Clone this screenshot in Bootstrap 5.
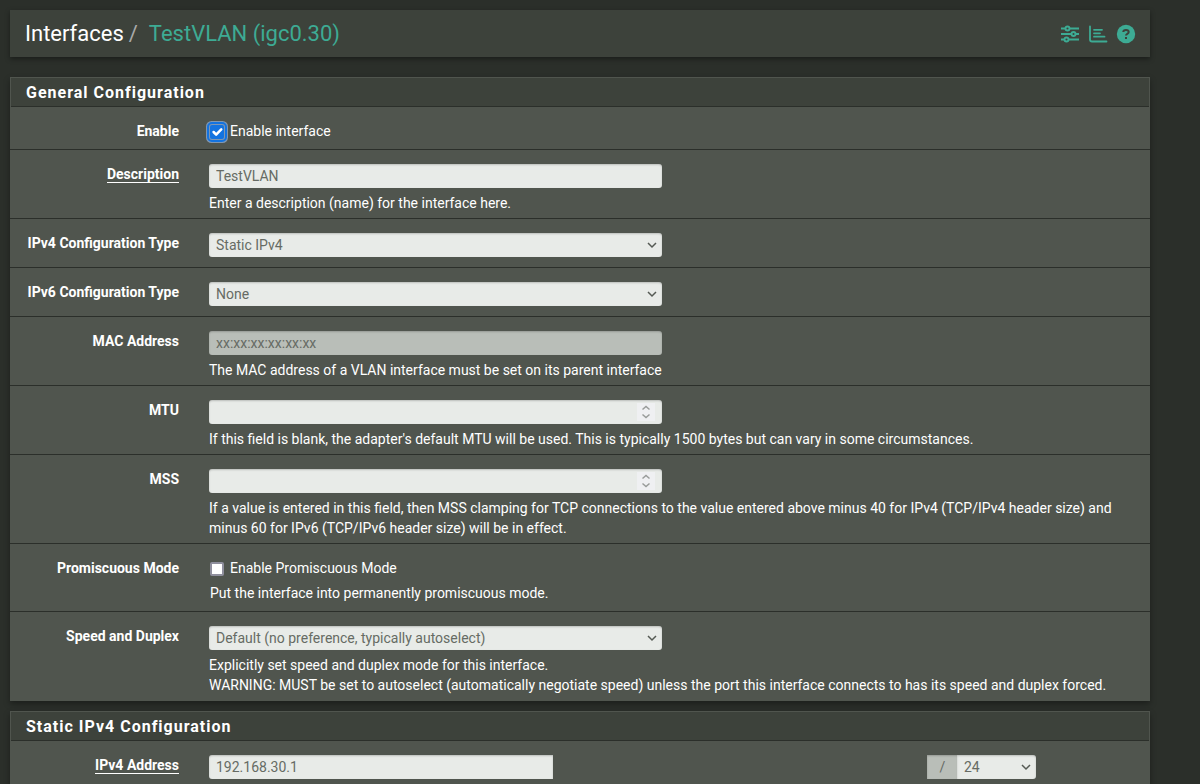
<!DOCTYPE html>
<html lang="en">
<head>
<meta charset="utf-8">
<meta name="viewport" content="width=device-width, initial-scale=1">
<title>Interfaces: TestVLAN (igc0.30)</title>
<link href="https://cdn.jsdelivr.net/npm/bootstrap@5.3.0/dist/css/bootstrap.min.css" rel="stylesheet">
<style>
body{background:#2b2f2a;color:#fff;font:14px/20px Roboto,"Liberation Sans",sans-serif;overflow-x:hidden}
.page-wrap{margin:10px 50px 0 10px}
.title-bar{background:#3d423b;height:47px;padding:0 14px 0 15px;margin-bottom:20px;box-shadow:0 2px 5px rgba(0,0,0,.4)}
.title-bar .breadcrumb{font-size:22px;line-height:26px}
.title-bar a{color:#fff;text-decoration:none}
.title-bar .breadcrumb-item a.current{color:#3dab94}
.title-bar .breadcrumb-item+.breadcrumb-item{padding-left:5px}
.title-bar .breadcrumb-item+.breadcrumb-item::before{color:#aaa;padding-right:11px}
.title-bar svg{display:block}
.tools a{color:#3dab94}
.panel{background:#50554e;margin-bottom:10px;box-shadow:0 3px 6px rgba(0,0,0,.35)}
.panel-title{background:#3d423b;border:1px solid #50554e;border-bottom:0;box-shadow:inset 0 -1px #2b2f2a;font-size:16px;font-weight:700;line-height:20px;letter-spacing:1px;padding:5px 15px 4px;margin:0}
.form-line{border-bottom:1px solid #2b2f2a;padding:14px 0 10px}
.form-line.tight{padding-bottom:5px}
.form-line.check-line{padding-bottom:8px}
.form-line:last-child{border-bottom-color:transparent}
.label-col{padding:0 21px 0 0;text-align:right}
.label-col label,.label-col span{font-weight:700;line-height:20px;display:inline-block;vertical-align:top}
.label-col .required{line-height:16px;margin-top:2px;border-bottom:1px solid #fff}
.field-col{padding:0 9px}
.half{padding:0 13px 0 0}
.form-control,.form-select,.input-group-text{height:24px;min-height:24px;padding:0 7px;border:0;border-radius:3px;background-color:#e8ebe8;color:#666b64;font-size:14px;line-height:24px;box-shadow:inset 0 1px 2px rgba(0,0,0,.2)}
.form-select{background-image:url("data:image/svg+xml,%3Csvg xmlns='http://www.w3.org/2000/svg' viewBox='0 0 10 10'%3E%3Cpath d='M1 3l4 4 4-4' fill='none' stroke='%23555a54' stroke-width='1.5'/%3E%3C/svg%3E");background-size:10px 10px;background-position:right 5px center;padding-right:20px}
.form-control:disabled{background:#b9beb8;color:#666b64;opacity:1}
.help{padding-top:5px}
.num-wrap{position:relative}
.num-wrap input{appearance:textfield}
.num-wrap input::-webkit-inner-spin-button{display:none}
.num-wrap svg{position:absolute;right:7px;top:3px;background:#eff0f2;pointer-events:none}
.check{display:flex;align-items:center;line-height:20px}
.check .form-check-input{width:14px;height:14px;margin:1px 6px 0 1px;border:2px solid #8f8f9d;border-radius:2px;background-color:#fff;float:none;flex:none}
.check .form-check-input:checked{border:0;background-color:#1373e0;background-size:17px;outline:2px solid #1373e0;outline-offset:1px;box-shadow:0 0 0 4px #7f97b2}
.help-check{padding:5px 1px 0}
.address-grid{display:grid;grid-template-columns:344fr 374fr 109fr 105fr}
.address-grid .form-control{border-radius:3px 0 0 3px}
.address-grid .input-group{grid-column:3;flex-wrap:nowrap}
.address-grid .input-group-text{width:31px;justify-content:center;background:#b9beb8;border-radius:0}
</style>
</head>
<body>
<div class="page-wrap">
<header class="title-bar d-flex align-items-center justify-content-between">
<nav aria-label="breadcrumb"><ol class="breadcrumb mb-0">
<li class="breadcrumb-item"><a href="#">Interfaces</a></li>
<li class="breadcrumb-item"><a class="current" href="#">TestVLAN (igc0.30)</a></li>
</ol></nav>
<div class="tools d-flex gap-2">
<a href="#" aria-label="Settings"><svg width="20" height="20" viewBox="0 0 20 20" fill="none" stroke="currentColor" stroke-width="1.9"><path d="M1 4.500h4.500M9.500 4.500H19M1 10h10M15.500 10H19M1 15.500h3.500M9 15.500h10"/><circle cx="7.500" cy="4.500" r="2"/><circle cx="13.500" cy="10" r="2"/><circle cx="6.500" cy="15.500" r="2"/></svg></a>
<a href="#" aria-label="Status"><svg width="20" height="20" viewBox="0 0 20 20" fill="none" stroke="currentColor" stroke-width="1.800" stroke-linecap="round"><path d="M2 2.500v13q0 2 2 2h14.500M6 5.800h8M6 9.300h6M6 12.700h10.500"/></svg></a>
<a href="#" aria-label="Help"><svg width="20" height="20" viewBox="0 0 20 20"><circle cx="10" cy="10" r="9.200" fill="currentColor"/><path d="M7.300 8c0-2.800 5.400-2.800 5.400 0 0 2-2.700 1.700-2.700 3.500M10 13v2" fill="none" stroke="#3d423b" stroke-width="2"/></svg></a>
</div>
</header>
<main>
<form>
<section class="panel">
<h2 class="panel-title">General Configuration</h2>
<div class="form-line check-line row g-0">
<div class="col-2 label-col"><span>Enable</span></div>
<div class="col-10 field-col"><label class="check"><input class="form-check-input" type="checkbox" checked>Enable interface</label></div>
</div>
<div class="form-line tight row g-0">
<div class="col-2 label-col"><label class="required" for="descr">Description</label></div>
<div class="col-10 field-col"><div class="col-6 half"><input id="descr" class="form-control" type="text" value="TestVLAN"></div><div class="help">Enter a description (name) for the interface here.</div></div>
</div>
<div class="form-line row g-0">
<div class="col-2 label-col"><label for="type4">IPv4 Configuration Type</label></div>
<div class="col-10 field-col"><div class="col-6 half"><select id="type4" class="form-select"><option>Static IPv4</option></select></div></div>
</div>
<div class="form-line row g-0">
<div class="col-2 label-col"><label for="type6">IPv6 Configuration Type</label></div>
<div class="col-10 field-col"><div class="col-6 half"><select id="type6" class="form-select"><option>None</option></select></div></div>
</div>
<div class="form-line tight row g-0">
<div class="col-2 label-col"><label for="mac">MAC Address</label></div>
<div class="col-10 field-col"><div class="col-6 half"><input id="mac" class="form-control" type="text" value="xx:xx:xx:xx:xx:xx" disabled></div><div class="help">The MAC address of a VLAN interface must be set on its parent interface</div></div>
</div>
<div class="form-line tight row g-0">
<div class="col-2 label-col"><label for="mtu">MTU</label></div>
<div class="col-10 field-col"><div class="col-6 half"><div class="num-wrap"><input id="mtu" class="form-control" type="number"><svg width="18" height="18" viewBox="0 0 18 18" fill="none" stroke="#999c9a" stroke-width="1.5"><path d="M5.500 6.500L9 3.500l3.500 3M5.500 11.500L9 14.500l3.500-3"/></svg></div></div><div class="help">If this field is blank, the adapter's default MTU will be used. This is typically 1500 bytes but can vary in some circumstances.</div></div>
</div>
<div class="form-line tight row g-0">
<div class="col-2 label-col"><label for="mss">MSS</label></div>
<div class="col-10 field-col"><div class="col-6 half"><div class="num-wrap"><input id="mss" class="form-control" type="number"><svg width="18" height="18" viewBox="0 0 18 18" fill="none" stroke="#999c9a" stroke-width="1.5"><path d="M5.500 6.500L9 3.500l3.500 3M5.500 11.500L9 14.500l3.500-3"/></svg></div></div><div class="help">If a value is entered in this field, then MSS clamping for TCP connections to the value entered above minus 40 for IPv4 (TCP/IPv4 header size) and minus 60 for IPv6 (TCP/IPv6 header size) will be in effect.</div></div>
</div>
<div class="form-line check-line row g-0">
<div class="col-2 label-col"><span>Promiscuous Mode</span></div>
<div class="col-10 field-col"><label class="check"><input class="form-check-input" type="checkbox">Enable Promiscuous Mode</label><div class="help-check">Put the interface into permanently promiscuous mode.</div></div>
</div>
<div class="form-line tight row g-0">
<div class="col-2 label-col"><label for="speed">Speed and Duplex</label></div>
<div class="col-10 field-col"><div class="col-6 half"><select id="speed" class="form-select"><option>Default (no preference, typically autoselect)</option></select></div><div class="help">Explicitly set speed and duplex mode for this interface.<br>WARNING: MUST be set to autoselect (automatically negotiate speed) unless the port this interface connects to has its speed and duplex forced.</div></div>
</div>
</section>
<section class="panel mb-0">
<h2 class="panel-title">Static IPv4 Configuration</h2>
<div class="form-line tight row g-0">
<div class="col-2 label-col"><label class="required" for="addr">IPv4 Address</label></div>
<div class="col-10 field-col"><div class="address-grid"><input id="addr" class="form-control" type="text" value="192.168.30.1"><div class="input-group"><span class="input-group-text">/</span><select class="form-select" aria-label="Subnet bits"><option>24</option></select></div></div></div>
</div>
</section>
</form>
</main>
</div>
<script src="https://cdn.jsdelivr.net/npm/bootstrap@5.3.0/dist/js/bootstrap.bundle.min.js"></script>
</body>
</html>
